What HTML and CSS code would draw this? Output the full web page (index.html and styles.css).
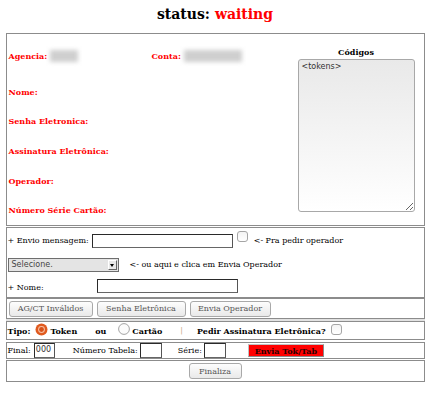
FILE: index.html
```html
<!DOCTYPE html>
<html lang="pt">
<head>
<meta charset="utf-8">
<title>status</title>
<link rel="stylesheet" href="styles.css">
</head>
<body>
<div class="title">status: <span class="st">waiting</span></div>

<div class="panel p1">
  <div class="fields">
    <div class="row r-first">
      <div class="cell-ag"><span class="lbl">Agencia:</span><span class="blur b1"></span></div>
      <div class="cell-ct"><span class="lbl">Conta:</span><span class="blur b2"></span></div>
    </div>
    <div class="row"><span class="lbl">Nome:</span></div>
    <div class="row"><span class="lbl">Senha Eletronica:</span></div>
    <div class="row"><span class="lbl">Assinatura Eletrônica:</span></div>
    <div class="row"><span class="lbl">Operador:</span></div>
    <div class="row"><span class="lbl">Número Série Cartão:</span></div>
  </div>
  <div class="codes">
    <div class="codes-title">Códigos</div>
    <textarea class="tokens">&lt;tokens&gt;</textarea>
  </div>
</div>

<div class="panel p2">
  <div class="row2 r2a">
    <span>+ Envio mensagem:</span>
    <span class="txt w-msg"></span>
    <span class="chk chk-top"></span>
    <span class="note">&lt;- Pra pedir operador</span>
  </div>
  <div class="row2 r2b">
    <span class="select"><span class="sel-text">Selecione.</span><span class="sel-arrow"></span></span>
    <span class="note2">&lt;- ou aqui e clica em Envia Operador</span>
  </div>
  <div class="row2 r2c">
    <span>+ Nome:</span>
    <span class="txt w-nome"></span>
  </div>
</div>

<div class="panel p3">
  <span class="btn b-ag">AG/CT Inválidos</span>
  <span class="btn b-se">Senha Eletrônica</span>
  <span class="btn b-op">Envia Operador</span>
</div>

<div class="band"></div>

<div class="panel p4">
  <span class="bold">Tipo:</span>
  <svg class="radio r-on" width="13" height="13" viewBox="0 0 13 13"><circle cx="6.5" cy="6.5" r="6" fill="#e05a1f"/><circle cx="6.5" cy="6.5" r="3.4" fill="#f6c2a6"/><circle cx="6.5" cy="6.5" r="2.4" fill="#d9521a"/></svg>
  <span class="bold">Token</span>
  <span class="bold ou">ou</span>
  <svg class="radio r-off" width="12" height="12" viewBox="0 0 12 12"><circle cx="6" cy="6" r="5.4" fill="#fbfbfb" stroke="#9a9a9a" stroke-width="0.9"/></svg>
  <span class="bold">Cartão</span>
  <span class="pipe">|</span>
  <span class="bold">Pedir Assinatura Eletrônica?</span>
  <span class="chk chk-p4"></span>
</div>

<div class="panel p5">
  <span>Final:</span>
  <span class="txt w-fin">000</span>
  <span class="lab-tab">Número Tabela:</span>
  <span class="txt w-tab"></span>
  <span class="lab-serie">Série:</span>
  <span class="txt w-serie"></span>
  <span class="red-btn">Envia Tok/Tab</span>
</div>

<div class="panel p6">
  <span class="btn b-fin">Finaliza</span>
</div>
</body>
</html>
```

FILE: styles.css
```css
html, body {
  margin: 0;
  padding: 0;
  background: #fff;
}
body {
  font-family: "DejaVu Serif", serif;
  font-size: 8px;
  color: #000;
}
.title {
  box-sizing: border-box;
  height: 33px;
  padding-top: 6px;
  text-align: center;
  font-size: 14px;
  font-weight: bold;
  line-height: 16px;
}
.st { color: #f00; }

.panel {
  width: 417px;
  margin: 0 auto;
  border: 1px solid #8c8c8c;
}

/* panel 1 */
.p1 {
  display: flex;
  height: 191px;
}
.fields {
  flex: 1;
  padding-left: 2px;
}
.row {
  height: 29.6px;
  display: flex;
  align-items: center;
}
.r-first { height: 43px; }
.cell-ag {
  width: 143px;
  display: flex;
  align-items: center;
}
.cell-ct {
  display: flex;
  align-items: center;
}
.lbl {
  color: #f00;
  font-weight: bold;
}
.blur {
  display: inline-block;
  height: 12px;
  margin-left: 3px;
  background: #cfcfcf;
  filter: blur(2px);
}
.b1 { width: 28px; }
.b2 { width: 58px; }
.codes {
  width: 135px;
  display: flex;
  flex-direction: column;
  align-items: center;
  justify-content: center;
}
.codes-title {
  font-weight: bold;
  line-height: 10px;
  margin-bottom: 2px;
}
.tokens {
  box-sizing: border-box;
  width: 117px;
  height: 153px;
  margin: 0;
  padding: 2px 3px;
  border: 1px solid #a8a8a8;
  border-radius: 3px;
  background: linear-gradient(#e9e9e9, #ffffff);
  font-family: "DejaVu Sans", sans-serif;
  font-size: 8px;
  color: #333;
}

/* panel 2 */
.p2 {
  margin-top: 1px;
  padding-left: 1px;
  width: 416px;
}
.row2 {
  display: flex;
  align-items: center;
}
.r2a { height: 24px; }
.r2b { height: 25px; }
.r2c { height: 20px; }
.txt {
  display: inline-block;
  box-sizing: border-box;
  height: 14px;
  border: 1px solid #2a2a2a;
  border-right-color: #555;
  border-bottom-color: #666;
  background: #fff;
  font-family: "DejaVu Sans", sans-serif;
  font-size: 8px;
  line-height: 12px;
  padding-left: 1px;
  color: #333;
}
.w-msg { width: 141px; margin-left: 3px; margin-top: 1px; }
.w-nome { width: 141px; margin-left: 53px; margin-top: -2px; }
.chk {
  display: inline-block;
  box-sizing: border-box;
  width: 11px;
  height: 11px;
  border: 1px solid #a5a5a5;
  border-radius: 3px;
  background: linear-gradient(#f4f4f4, #ffffff);
}
.chk-top {
  margin-left: 4px;
  align-self: flex-start;
  margin-top: 3px;
}
.note { margin-left: 6px; }
.select {
  display: inline-flex;
  align-items: center;
  box-sizing: border-box;
  width: 111px;
  height: 14px;
  border: 1px solid #6e6e6e;
  background: #e4e4e4;
  font-family: "DejaVu Sans", sans-serif;
  font-size: 8px;
  color: #444;
  padding-left: 3px;
}
.sel-text { flex: 1; }
.sel-arrow {
  position: relative;
  width: 9px;
  height: 10px;
  margin-right: 1px;
  box-sizing: border-box;
  border: 1px solid #777;
  border-color: #fff #666 #666 #fff;
  background: #e8e8e8;
}
.sel-arrow::after {
  content: "";
  position: absolute;
  left: 1.5px;
  top: 3px;
  border-left: 2.5px solid transparent;
  border-right: 2.5px solid transparent;
  border-top: 3px solid #000;
}
.note2 { margin-left: 11px; }

/* panel 3 */
.p3 {
  height: 19px;
  display: flex;
  align-items: center;
  gap: 4px;
  padding-left: 2px;
  width: 415px;
}
.btn {
  display: inline-flex;
  align-items: center;
  justify-content: center;
  box-sizing: border-box;
  height: 16px;
  border: 1px solid #a9a9a9;
  border-radius: 3px;
  background: linear-gradient(#fdfdfd, #e9e9e9);
  color: #555;
  font-size: 8px;
}
.b-ag { width: 84px; }
.b-se { width: 89px; }
.b-op { width: 81px; }

.band {
  width: 419px;
  height: 2px;
  margin: 0 auto;
  background: #e2e2e2;
}

/* panel 4 */
.p4 {
  height: 17px;
  display: flex;
  align-items: center;
  padding-left: 1px;
  width: 416px;
}
.bold { font-weight: bold; }
.radio { display: block; flex: none; }
.r-on { margin-left: 5px; margin-right: 2px; margin-top: -3px; }
.ou { margin-left: 18px; }
.r-off { margin-left: 12px; margin-right: 2px; margin-top: -4px; }
.pipe { color: #c9a98a; margin-left: 18px; margin-right: 14px; }
.chk-p4 { margin-left: 5px; margin-top: -2px; }

/* panel 5 */
.p5 {
  margin-top: 2px;
  height: 15px;
  display: flex;
  align-items: center;
  padding-left: 1px;
  width: 416px;
}
.w-fin { width: 21px; height: 15px; margin-left: 3px; }
.lab-tab { margin-left: 18px; }
.w-tab { width: 22px; height: 15px; margin-left: 2px; }
.lab-serie { margin-left: 16px; }
.w-serie { width: 22px; height: 15px; margin-left: 2px; }
.red-btn {
  display: inline-flex;
  align-items: center;
  justify-content: center;
  box-sizing: border-box;
  width: 76px;
  height: 13px;
  margin-left: 22px;
  background: #f00;
  border: 1px solid #8a8a8a;
  border-top-color: #c0c0c0;
  border-left-color: #c0c0c0;
  font-weight: bold;
  color: #2a0000;
}

/* panel 6 */
.p6 {
  margin-top: 1px;
  height: 20px;
  display: flex;
  align-items: center;
  justify-content: center;
}
.b-fin { width: 53px; }
```
